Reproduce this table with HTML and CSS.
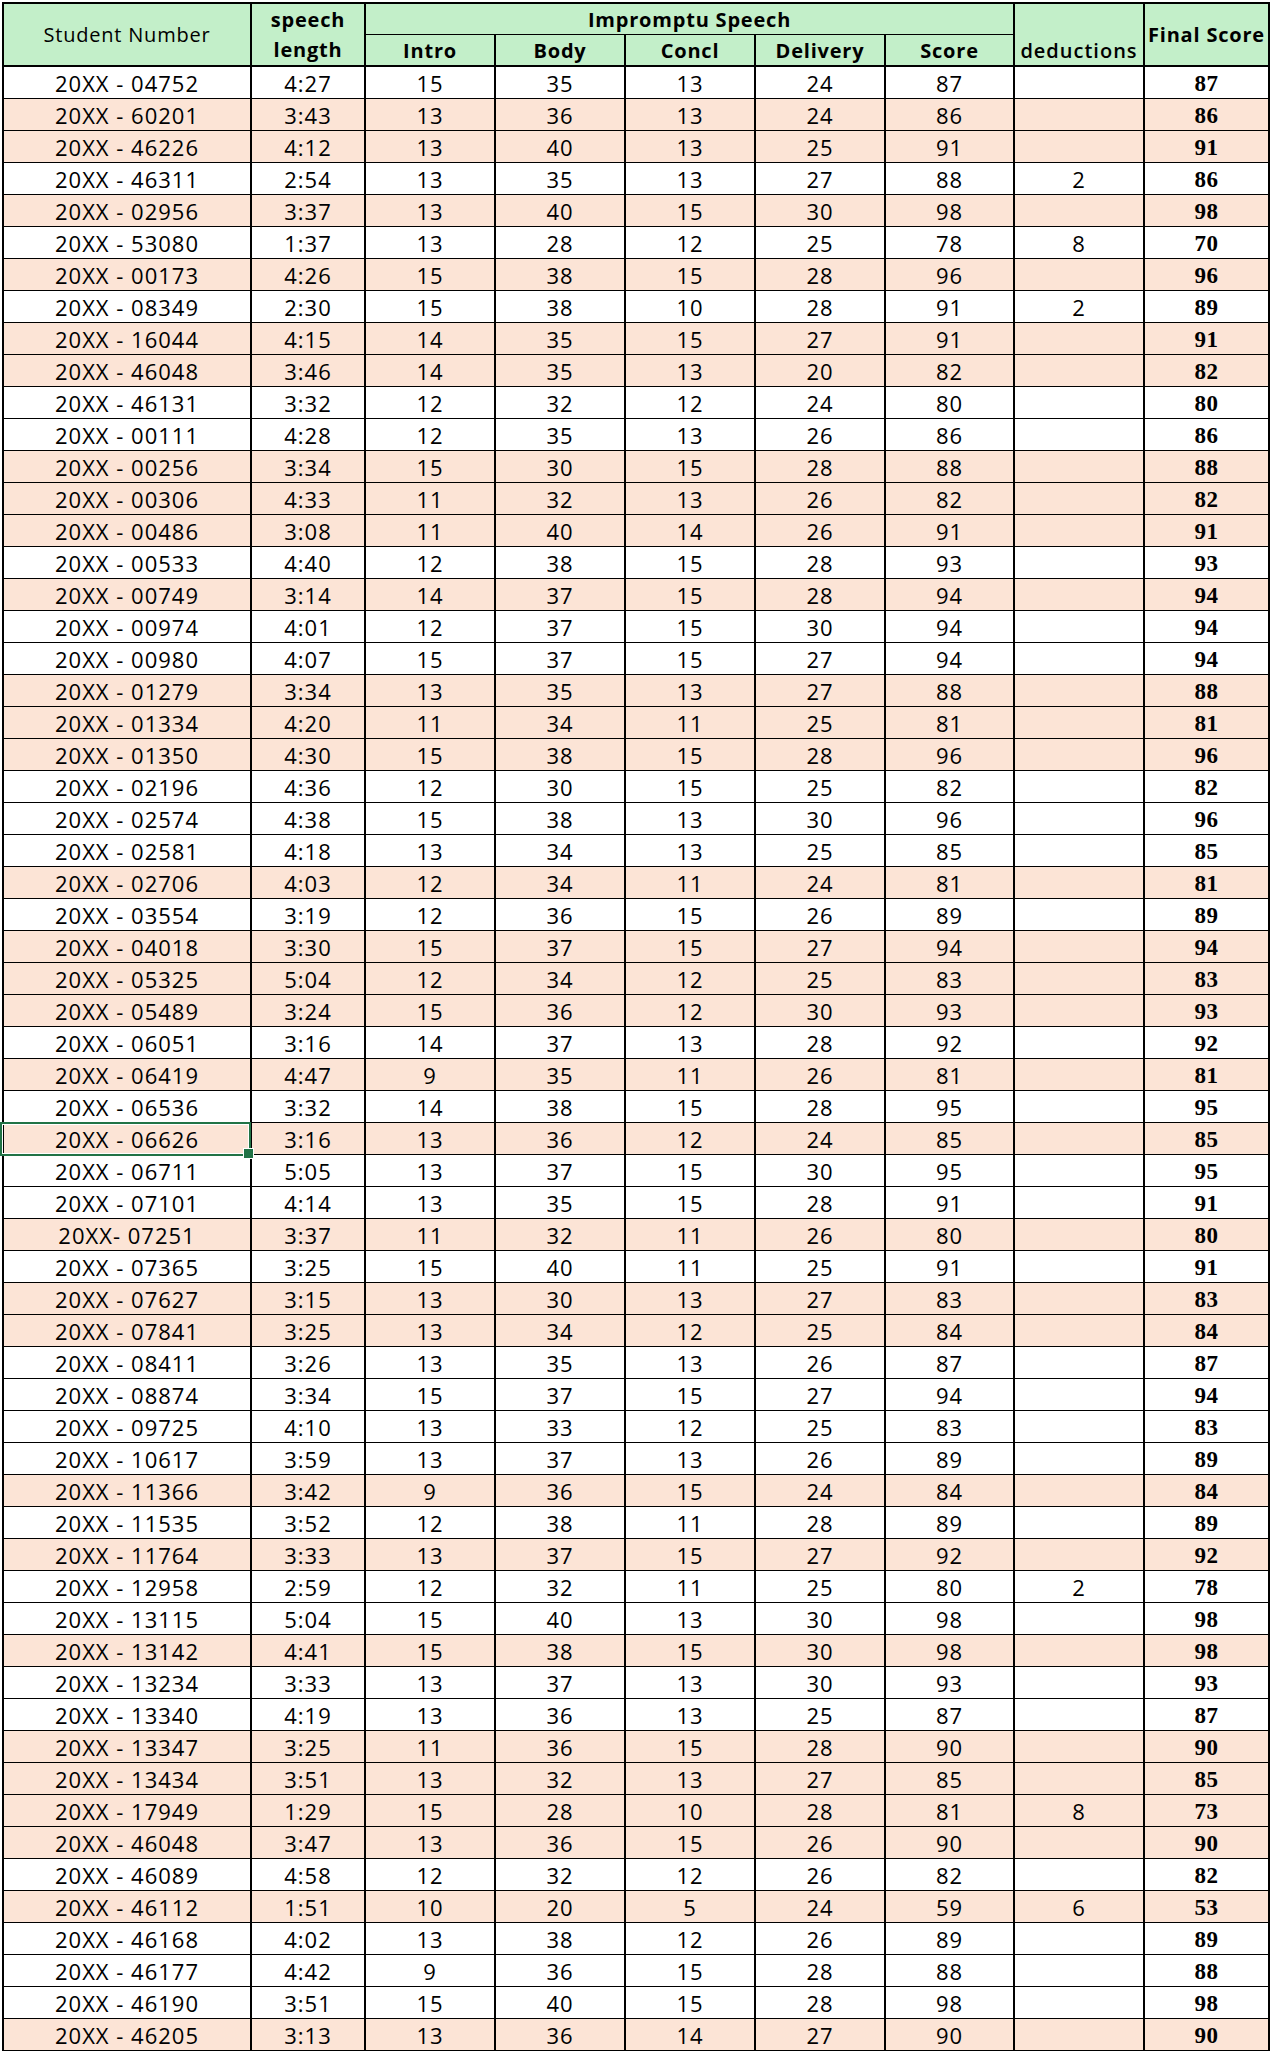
FILE: index.html
```html
<!DOCTYPE html>
<html lang="en">
<head>
<meta charset="utf-8">
<title>Impromptu Speech Scores</title>
<link rel="stylesheet" href="styles.css">
</head>
<body>
<table class="sheet">
<thead>
<tr>
<th class="tall sn"><span class="reg">Student Number</span></th>
<th class="tall"><span>speech<br>length</span></th>
<th class="imp">Impromptu Speech</th>
<th class="tall ded"><span>deductions</span></th>
<th class="tall"><span>Final Score</span></th>
</tr>
<tr>
<th class="sub">Intro</th>
<th class="sub">Body</th>
<th class="sub">Concl</th>
<th class="sub">Delivery</th>
<th class="sub">Score</th>
</tr>
</thead>
<tbody>
<tr><td>20XX - 04752</td><td>4:27</td><td>15</td><td>35</td><td>13</td><td>24</td><td>87</td><td></td><td>87</td></tr>
<tr class="p"><td>20XX - 60201</td><td>3:43</td><td>13</td><td>36</td><td>13</td><td>24</td><td>86</td><td></td><td>86</td></tr>
<tr class="p"><td>20XX - 46226</td><td>4:12</td><td>13</td><td>40</td><td>13</td><td>25</td><td>91</td><td></td><td>91</td></tr>
<tr><td>20XX - 46311</td><td>2:54</td><td>13</td><td>35</td><td>13</td><td>27</td><td>88</td><td>2</td><td>86</td></tr>
<tr class="p"><td>20XX - 02956</td><td>3:37</td><td>13</td><td>40</td><td>15</td><td>30</td><td>98</td><td></td><td>98</td></tr>
<tr><td>20XX - 53080</td><td>1:37</td><td>13</td><td>28</td><td>12</td><td>25</td><td>78</td><td>8</td><td>70</td></tr>
<tr class="p"><td>20XX - 00173</td><td>4:26</td><td>15</td><td>38</td><td>15</td><td>28</td><td>96</td><td></td><td>96</td></tr>
<tr><td>20XX - 08349</td><td>2:30</td><td>15</td><td>38</td><td>10</td><td>28</td><td>91</td><td>2</td><td>89</td></tr>
<tr class="p"><td>20XX - 16044</td><td>4:15</td><td>14</td><td>35</td><td>15</td><td>27</td><td>91</td><td></td><td>91</td></tr>
<tr class="p"><td>20XX - 46048</td><td>3:46</td><td>14</td><td>35</td><td>13</td><td>20</td><td>82</td><td></td><td>82</td></tr>
<tr><td>20XX - 46131</td><td>3:32</td><td>12</td><td>32</td><td>12</td><td>24</td><td>80</td><td></td><td>80</td></tr>
<tr><td>20XX - 00111</td><td>4:28</td><td>12</td><td>35</td><td>13</td><td>26</td><td>86</td><td></td><td>86</td></tr>
<tr class="p"><td>20XX - 00256</td><td>3:34</td><td>15</td><td>30</td><td>15</td><td>28</td><td>88</td><td></td><td>88</td></tr>
<tr class="p"><td>20XX - 00306</td><td>4:33</td><td>11</td><td>32</td><td>13</td><td>26</td><td>82</td><td></td><td>82</td></tr>
<tr class="p"><td>20XX - 00486</td><td>3:08</td><td>11</td><td>40</td><td>14</td><td>26</td><td>91</td><td></td><td>91</td></tr>
<tr><td>20XX - 00533</td><td>4:40</td><td>12</td><td>38</td><td>15</td><td>28</td><td>93</td><td></td><td>93</td></tr>
<tr class="p"><td>20XX - 00749</td><td>3:14</td><td>14</td><td>37</td><td>15</td><td>28</td><td>94</td><td></td><td>94</td></tr>
<tr><td>20XX - 00974</td><td>4:01</td><td>12</td><td>37</td><td>15</td><td>30</td><td>94</td><td></td><td>94</td></tr>
<tr><td>20XX - 00980</td><td>4:07</td><td>15</td><td>37</td><td>15</td><td>27</td><td>94</td><td></td><td>94</td></tr>
<tr class="p"><td>20XX - 01279</td><td>3:34</td><td>13</td><td>35</td><td>13</td><td>27</td><td>88</td><td></td><td>88</td></tr>
<tr class="p"><td>20XX - 01334</td><td>4:20</td><td>11</td><td>34</td><td>11</td><td>25</td><td>81</td><td></td><td>81</td></tr>
<tr class="p"><td>20XX - 01350</td><td>4:30</td><td>15</td><td>38</td><td>15</td><td>28</td><td>96</td><td></td><td>96</td></tr>
<tr><td>20XX - 02196</td><td>4:36</td><td>12</td><td>30</td><td>15</td><td>25</td><td>82</td><td></td><td>82</td></tr>
<tr><td>20XX - 02574</td><td>4:38</td><td>15</td><td>38</td><td>13</td><td>30</td><td>96</td><td></td><td>96</td></tr>
<tr><td>20XX - 02581</td><td>4:18</td><td>13</td><td>34</td><td>13</td><td>25</td><td>85</td><td></td><td>85</td></tr>
<tr class="p"><td>20XX - 02706</td><td>4:03</td><td>12</td><td>34</td><td>11</td><td>24</td><td>81</td><td></td><td>81</td></tr>
<tr><td>20XX - 03554</td><td>3:19</td><td>12</td><td>36</td><td>15</td><td>26</td><td>89</td><td></td><td>89</td></tr>
<tr class="p"><td>20XX - 04018</td><td>3:30</td><td>15</td><td>37</td><td>15</td><td>27</td><td>94</td><td></td><td>94</td></tr>
<tr class="p"><td>20XX - 05325</td><td>5:04</td><td>12</td><td>34</td><td>12</td><td>25</td><td>83</td><td></td><td>83</td></tr>
<tr class="p"><td>20XX - 05489</td><td>3:24</td><td>15</td><td>36</td><td>12</td><td>30</td><td>93</td><td></td><td>93</td></tr>
<tr><td>20XX - 06051</td><td>3:16</td><td>14</td><td>37</td><td>13</td><td>28</td><td>92</td><td></td><td>92</td></tr>
<tr class="p"><td>20XX - 06419</td><td>4:47</td><td>9</td><td>35</td><td>11</td><td>26</td><td>81</td><td></td><td>81</td></tr>
<tr><td>20XX - 06536</td><td>3:32</td><td>14</td><td>38</td><td>15</td><td>28</td><td>95</td><td></td><td>95</td></tr>
<tr class="p"><td class="sel">20XX - 06626</td><td>3:16</td><td>13</td><td>36</td><td>12</td><td>24</td><td>85</td><td></td><td>85</td></tr>
<tr><td>20XX - 06711</td><td>5:05</td><td>13</td><td>37</td><td>15</td><td>30</td><td>95</td><td></td><td>95</td></tr>
<tr><td>20XX - 07101</td><td>4:14</td><td>13</td><td>35</td><td>15</td><td>28</td><td>91</td><td></td><td>91</td></tr>
<tr class="p"><td>20XX- 07251</td><td>3:37</td><td>11</td><td>32</td><td>11</td><td>26</td><td>80</td><td></td><td>80</td></tr>
<tr><td>20XX - 07365</td><td>3:25</td><td>15</td><td>40</td><td>11</td><td>25</td><td>91</td><td></td><td>91</td></tr>
<tr class="p"><td>20XX - 07627</td><td>3:15</td><td>13</td><td>30</td><td>13</td><td>27</td><td>83</td><td></td><td>83</td></tr>
<tr class="p"><td>20XX - 07841</td><td>3:25</td><td>13</td><td>34</td><td>12</td><td>25</td><td>84</td><td></td><td>84</td></tr>
<tr><td>20XX - 08411</td><td>3:26</td><td>13</td><td>35</td><td>13</td><td>26</td><td>87</td><td></td><td>87</td></tr>
<tr><td>20XX - 08874</td><td>3:34</td><td>15</td><td>37</td><td>15</td><td>27</td><td>94</td><td></td><td>94</td></tr>
<tr><td>20XX - 09725</td><td>4:10</td><td>13</td><td>33</td><td>12</td><td>25</td><td>83</td><td></td><td>83</td></tr>
<tr><td>20XX - 10617</td><td>3:59</td><td>13</td><td>37</td><td>13</td><td>26</td><td>89</td><td></td><td>89</td></tr>
<tr class="p"><td>20XX - 11366</td><td>3:42</td><td>9</td><td>36</td><td>15</td><td>24</td><td>84</td><td></td><td>84</td></tr>
<tr><td>20XX - 11535</td><td>3:52</td><td>12</td><td>38</td><td>11</td><td>28</td><td>89</td><td></td><td>89</td></tr>
<tr class="p"><td>20XX - 11764</td><td>3:33</td><td>13</td><td>37</td><td>15</td><td>27</td><td>92</td><td></td><td>92</td></tr>
<tr><td>20XX - 12958</td><td>2:59</td><td>12</td><td>32</td><td>11</td><td>25</td><td>80</td><td>2</td><td>78</td></tr>
<tr><td>20XX - 13115</td><td>5:04</td><td>15</td><td>40</td><td>13</td><td>30</td><td>98</td><td></td><td>98</td></tr>
<tr class="p"><td>20XX - 13142</td><td>4:41</td><td>15</td><td>38</td><td>15</td><td>30</td><td>98</td><td></td><td>98</td></tr>
<tr><td>20XX - 13234</td><td>3:33</td><td>13</td><td>37</td><td>13</td><td>30</td><td>93</td><td></td><td>93</td></tr>
<tr><td>20XX - 13340</td><td>4:19</td><td>13</td><td>36</td><td>13</td><td>25</td><td>87</td><td></td><td>87</td></tr>
<tr class="p"><td>20XX - 13347</td><td>3:25</td><td>11</td><td>36</td><td>15</td><td>28</td><td>90</td><td></td><td>90</td></tr>
<tr class="p"><td>20XX - 13434</td><td>3:51</td><td>13</td><td>32</td><td>13</td><td>27</td><td>85</td><td></td><td>85</td></tr>
<tr class="p"><td>20XX - 17949</td><td>1:29</td><td>15</td><td>28</td><td>10</td><td>28</td><td>81</td><td>8</td><td>73</td></tr>
<tr class="p"><td>20XX - 46048</td><td>3:47</td><td>13</td><td>36</td><td>15</td><td>26</td><td>90</td><td></td><td>90</td></tr>
<tr><td>20XX - 46089</td><td>4:58</td><td>12</td><td>32</td><td>12</td><td>26</td><td>82</td><td></td><td>82</td></tr>
<tr class="p"><td>20XX - 46112</td><td>1:51</td><td>10</td><td>20</td><td>5</td><td>24</td><td>59</td><td>6</td><td>53</td></tr>
<tr><td>20XX - 46168</td><td>4:02</td><td>13</td><td>38</td><td>12</td><td>26</td><td>89</td><td></td><td>89</td></tr>
<tr><td>20XX - 46177</td><td>4:42</td><td>9</td><td>36</td><td>15</td><td>28</td><td>88</td><td></td><td>88</td></tr>
<tr><td>20XX - 46190</td><td>3:51</td><td>15</td><td>40</td><td>15</td><td>28</td><td>98</td><td></td><td>98</td></tr>
<tr class="p"><td>20XX - 46205</td><td>3:13</td><td>13</td><td>36</td><td>14</td><td>27</td><td>90</td><td></td><td>90</td></tr>
</tbody>
</table>
</body>
</html>
```

FILE: styles.css
```css
html, body {
  margin: 0;
  padding: 0;
  background: #ffffff;
}

.sheet {
  display: grid;
  grid-template-columns: 248px 114px 130px 130px 130px 130px 129px 130px 125px;
  grid-template-rows: 31px 32px;
  grid-auto-rows: 32px;
  width: max-content;
  margin: 2px 0 0 2px;
  border-left: 2px solid #000;
  border-top: 2px solid #000;
  font-family: "Open Sans", "DejaVu Sans", sans-serif;
  color: #000;
}

.sheet thead,
.sheet tbody,
.sheet tr {
  display: contents;
}

.sheet th,
.sheet td {
  box-sizing: border-box;
  border-right: 2px solid #000;
  border-bottom: 1px solid #000;
  padding: 0;
  text-align: center;
  white-space: nowrap;
  overflow: visible;
}

.sheet th {
  background: #c3efc9;
  font-weight: 700;
  font-size: 20px;
  letter-spacing: 0.8px;
  line-height: 30px;
  padding-top: 1px;
}

.sheet th.tall {
  grid-row: span 2;
  border-bottom-width: 2px;
  padding-top: 0;
  display: flex;
  align-items: center;
  justify-content: center;
}

.sheet th.imp {
  grid-column: span 5;
}

.sheet th.sub {
  border-bottom-width: 2px;
}

.sheet th .reg {
  font-weight: 400;
  letter-spacing: 0.8px;
}

.sheet th.ded {
  align-items: flex-end;
  font-weight: 600;
  letter-spacing: 1px;
  line-height: 28px;
}

.sheet td {
  font-size: 22px;
  letter-spacing: 1px;
  line-height: 29px;
  padding-top: 2px;
  background: #ffffff;
}

.sheet tr.p td {
  background: #fce4d6;
}

.sheet td:last-child {
  font-family: "Liberation Serif", "DejaVu Serif", serif;
  font-weight: 700;
  font-size: 23px;
  letter-spacing: 0.6px;
  line-height: 30px;
}

.sheet td.sel {
  position: relative;
}

.sheet td.sel::after {
  content: "";
  position: absolute;
  left: -4px;
  top: -1px;
  right: -1px;
  bottom: -2px;
  border: 2px solid #217346;
  box-shadow: inset 0 0 0 1px #ffffff;
  pointer-events: none;
}

.sheet td.sel::before {
  content: "";
  position: absolute;
  right: -4px;
  bottom: -5px;
  width: 11px;
  height: 11px;
  box-sizing: border-box;
  background: #217346;
  border: 1px solid #ffffff;
  z-index: 2;
}
```
